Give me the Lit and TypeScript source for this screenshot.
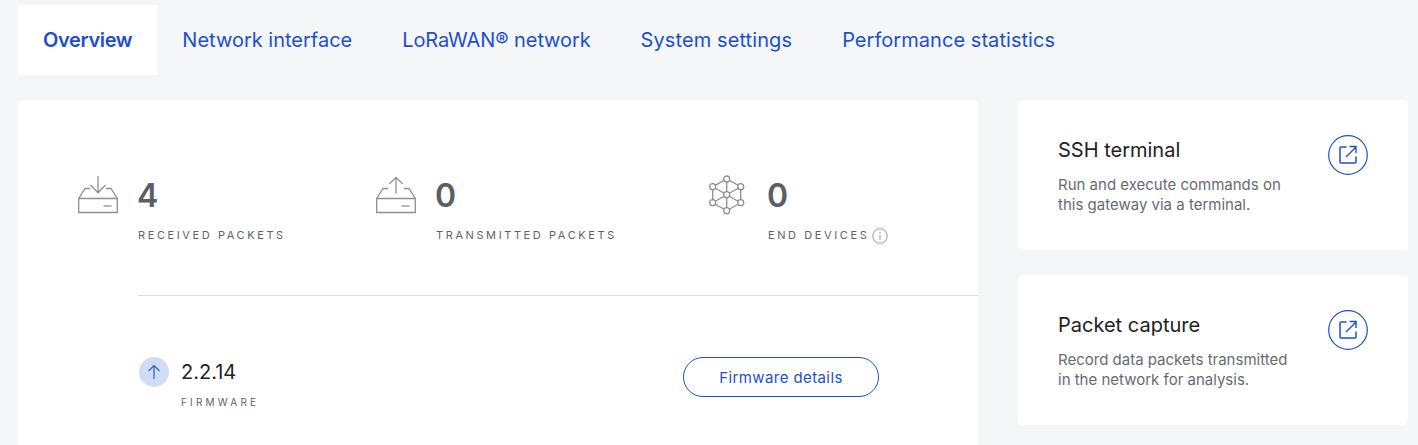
import { LitElement, html, css, svg } from "lit";
import { customElement } from "lit/decorators.js";

const inbox = (up: boolean) => svg`
  <svg class="ico" width="42" height="40" viewBox="0 0 42 40" fill="none" stroke="#8f8f8f" stroke-width="1.3">
    <path d="M.7 23.500h38.600v14H.7z"/>
    <path d="M.7 23.500 7 13.500h5M39.300 23.500 33 13.500h-5"/>
    <path d="M25.500 31h8" stroke-width="1.300"/>
    ${up
      ? svg`<path d="M20 18.500V2.300M13.300 9 20 2.300 26.700 9"/>`
      : svg`<path d="M20 1v17M12.500 10l7.500 7.800 7.500-7.800"/>`}
  </svg>`;

const nodes: [number, number][] = [
  [18.7, 4], [32.7, 11.7], [32.7, 27.7], [18.7, 35.7], [4.7, 27.7], [4.7, 11.7], [18.7, 19.7],
];

const hex = svg`
  <svg class="ico" width="40" height="40" viewBox="0 0 40 40" fill="none" stroke="#8f8f8f" stroke-width="1.300">
    <path d="M18.700 4 32.700 11.700V27.700L18.700 35.700 4.700 27.700V11.700Z"/>
    <path d="M18.700 4V35.700M4.700 11.700 32.700 27.700M32.700 11.700 4.700 27.700"/>
    ${nodes.map(([x, y]) => svg`<circle cx=${x} cy=${y} r="3" fill="#fff"/>`)}
  </svg>`;

const ext = html`
  <svg class="ext" width="40" height="40" viewBox="0 0 40 40" fill="none" stroke="#1c4fd0">
    <circle cx="20" cy="20" r="19.300" stroke-width="1.200"/>
    <path d="M18.500 12h-5.500a1 1 0 0 0-1 1v14a1 1 0 0 0 1 1h14a1 1 0 0 0 1-1v-5.500" stroke-width="1.500"/>
    <path d="M18 22 28 12M21.500 11.500h6.500v6.500" stroke-width="1.400"/>
  </svg>`;

@customElement("app-root")
export class AppRoot extends LitElement {
  static styles = css`
    :host {
      display: block;
      width: 1418px;
      height: 445px;
      overflow: hidden;
      background: #f5f6f8;
      font-family: Inter, "Liberation Sans", sans-serif;
      color: #222;
    }
    .tabs {
      display: flex;
      padding: 5px 0 0 18px;
      height: 70px;
    }
    .tab {
      display: flex;
      align-items: center;
      padding: 0 25px;
      font-size: 20px;
      color: #1c4fd0;
      height: 70px;
    }
    .tab.active {
      background: #fff;
      font-weight: 600;
      letter-spacing: -0.35px;
    }
    .tab.tight { letter-spacing: -0.1px; }
    .tab.wide { letter-spacing: 0.1px; }
    .tab.wider { letter-spacing: 0.05px; }
    .body {
      display: flex;
      align-items: flex-start;
      gap: 40px;
      margin: 25px 0 0 18px;
    }
    .main {
      width: 960px;
      height: 360px;
      box-sizing: border-box;
      background: #fff;
      border-radius: 5px 5px 0 0;
      padding: 72px 0 0 60px;
    }
    .stats {
      display: grid;
      grid-template-columns: 298px 332px auto;
      height: 123px;
    }
    .stat {
      display: grid;
      grid-template-columns: 42px auto;
      column-gap: 18px;
      align-content: start;
    }
    .ico { display: block; margin-top: 3px; }
    .num {
      font-size: 32px;
      line-height: 46px;
      font-weight: 600;
      color: #5a5f66;
      padding-top: 1px;
      margin-left: -1px;
    }
    .label {
      grid-column: 2;
      margin-top: 8px;
      height: 16px;
      font-size: 11px;
      line-height: 16px;
      letter-spacing: 2.6px;
      color: #5f6368;
      display: flex;
      align-items: center;
      white-space: nowrap;
    }
    .info { margin: 1px 0 -1px 3px; }
    .fw {
      margin-left: 60px;
      border-top: 1px solid #ddd;
      display: flex;
      padding: 61px 0 0 1px;
      width: 840px;
      box-sizing: border-box;
    }
    .fw-icon {
      width: 30px;
      height: 30px;
      border-radius: 50%;
      background: #d0dcf5;
      display: flex;
      align-items: center;
      justify-content: center;
      flex: none;
    }
    .fw-text { margin-left: 12px; width: 502px; }
    .fw-ver { font-size: 20px; line-height: 30px; color: #222; }
    .fw-label {
      margin-top: 8px;
      font-size: 10px;
      line-height: 14px;
      letter-spacing: 3.2px;
      color: #5f6368;
    }
    .btn {
      width: 196px;
      height: 40px;
      box-sizing: border-box;
      border: 1px solid #1c4fd0;
      border-radius: 20px;
      display: flex;
      align-items: center;
      justify-content: center;
      font-size: 15px;
      letter-spacing: 0.4px;
      color: #1c4fd0;
    }
    .side {
      display: flex;
      flex-direction: column;
      gap: 25px;
      width: 390px;
    }
    .card {
      height: 150px;
      box-sizing: border-box;
      background: #fff;
      border-radius: 5px;
      padding: 35px 40px;
      display: flex;
      justify-content: space-between;
    }
    .title { font-size: 20px; line-height: 30px; color: #222; }
    .desc {
      margin-top: 10px;
      font-size: 15px;
      line-height: 20px;
      color: #666b73;
    }
    .ext { flex: none; }
  `;

  render() {
    return html`
      <div class="tabs">
        <div class="tab active">Overview</div>
        <div class="tab">Network interface</div>
        <div class="tab tight">LoRaWAN® network</div>
        <div class="tab wide">System settings</div>
        <div class="tab wider">Performance statistics</div>
      </div>
      <div class="body">
        <div class="main">
          <div class="stats">
            <div class="stat">
              ${inbox(false)}
              <div class="num">4</div>
              <div class="label">RECEIVED PACKETS</div>
            </div>
            <div class="stat">
              ${inbox(true)}
              <div class="num">0</div>
              <div class="label">TRANSMITTED PACKETS</div>
            </div>
            <div class="stat">
              ${hex}
              <div class="num">0</div>
              <div class="label">END DEVICES
                <svg class="info" width="16" height="16" viewBox="0 0 16 16" fill="none" stroke="#999">
                  <circle cx="8" cy="8" r="7.200"/>
                  <path d="M8 7v5M8 4v1.500"/>
                </svg>
              </div>
            </div>
          </div>
          <div class="fw">
            <div class="fw-icon">
              <svg width="16" height="16" viewBox="0 0 16 16" fill="none" stroke="#2c5fd6" stroke-width="1.200">
                <path d="M8 15V1.500M2.500 7 8 1.500 13.500 7"/>
              </svg>
            </div>
            <div class="fw-text">
              <div class="fw-ver">2.2.14</div>
              <div class="fw-label">FIRMWARE</div>
            </div>
            <div class="btn">Firmware details</div>
          </div>
        </div>
        <div class="side">
          <div class="card">
            <div>
              <div class="title">SSH terminal</div>
              <div class="desc">Run and execute commands on<br />this gateway via a terminal.</div>
            </div>
            ${ext}
          </div>
          <div class="card">
            <div>
              <div class="title">Packet capture</div>
              <div class="desc">Record data packets transmitted<br />in the network for analysis.</div>
            </div>
            ${ext}
          </div>
        </div>
      </div>
    `;
  }
}
